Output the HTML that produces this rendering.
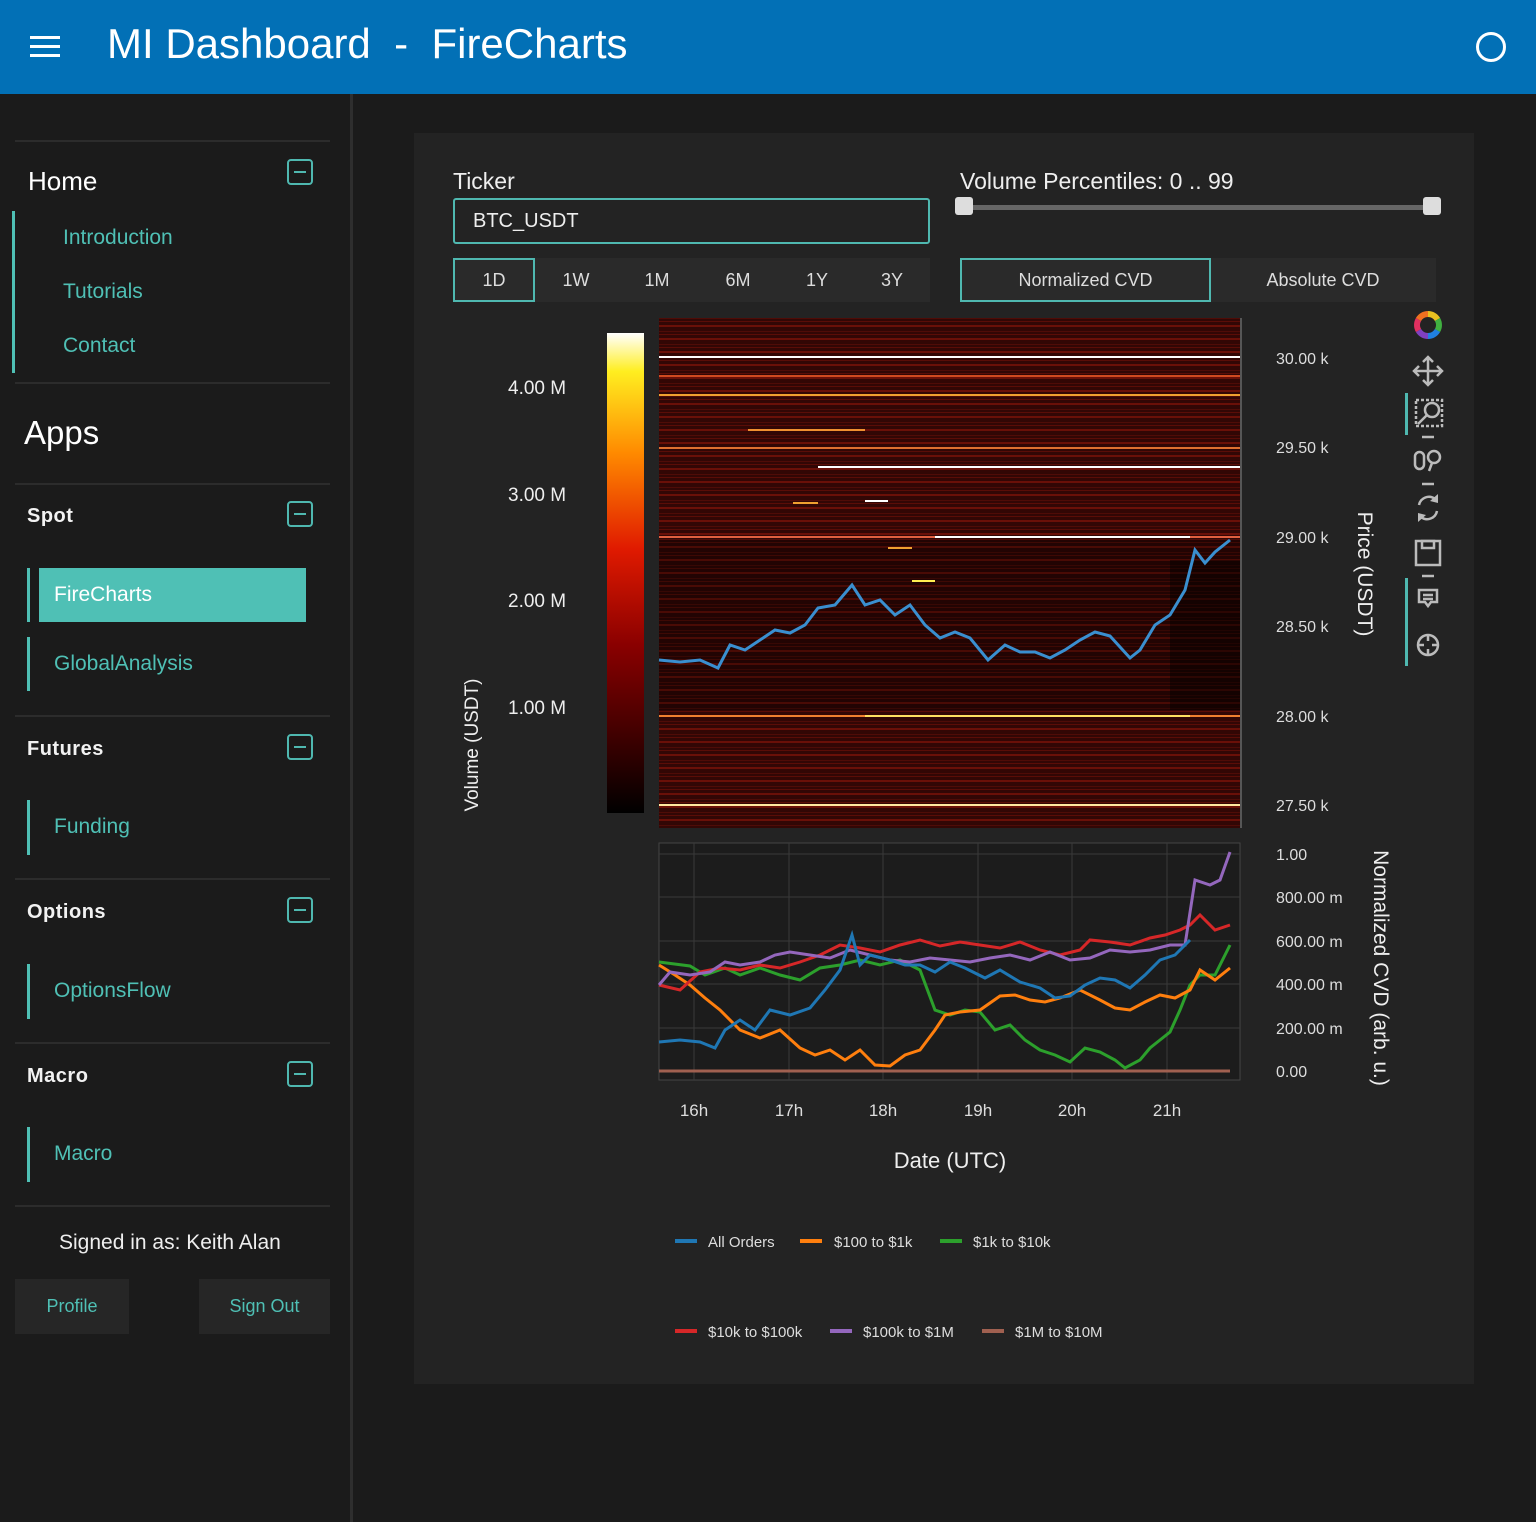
<!DOCTYPE html>
<html><head><meta charset="utf-8"><style>
*{margin:0;padding:0;box-sizing:border-box}
body{width:1536px;height:1522px;background:#1b1b1b;font-family:"Liberation Sans","DejaVu Sans",sans-serif;position:relative;overflow:hidden;color:#eee}
.hdr{position:absolute;left:0;top:0;width:1536px;height:94px;background:#0270b6}
.hdr .t{position:absolute;left:107px;top:20px;font-size:42px;color:#fff;white-space:pre}
.ham{position:absolute;left:30px;top:36px;width:30px}
.ham i{display:block;height:3px;background:#fff;margin-bottom:6px}
.circ{position:absolute;left:1476px;top:32px;width:30px;height:30px;border:3px solid #fff;border-radius:50%}
.sb{position:absolute;left:0;top:94px;width:353px;height:1428px;border-right:3px solid #2e2e2e}
.hr{position:absolute;left:15px;width:315px;height:2px;background:#2c2c2c}
.ab{position:absolute;font-size:22px;color:#fff}
.sec{position:absolute;left:27px;font-size:20px;font-weight:bold;color:#f2f2f2;letter-spacing:.5px}
.mn{position:absolute;left:287px;width:26px;height:26px;border:2px solid #4fb8b0;border-radius:4px}
.mn:after{content:"";position:absolute;left:5px;top:10px;width:12px;height:2px;background:#4fb8b0}
.lk{position:absolute;font-size:21px;color:#4fc0b5}
.vb{position:absolute;width:3px;background:#4fc0b5}
.btn{position:absolute;top:1279px;height:55px;background:#262626;color:#4fc0b5;font-size:18px;text-align:center;line-height:55px}
.panel{position:absolute;left:414px;top:133px;width:1060px;height:1251px;background:#232323}
.lbl{position:absolute;font-size:23px;color:#eee}
.tab{position:absolute;top:258px;height:44px;font-size:18px;color:#ddd;text-align:center;line-height:44px}
</style></head><body>
<div class="hdr"><div class="ham"><i></i><i></i><i></i></div><div class="t">MI Dashboard  -  FireCharts</div><div class="circ"></div></div>
<div class="sb"></div>
<div class="hr" style="top:140px"></div>
<div class="ab" style="left:28px;top:166px;font-size:26px">Home</div><div class="mn" style="top:159px"></div>
<div class="vb" style="left:12px;top:211px;height:162px"></div>
<div class="lk" style="left:63px;top:226px">Introduction</div>
<div class="lk" style="left:63px;top:280px">Tutorials</div>
<div class="lk" style="left:63px;top:334px">Contact</div>
<div class="hr" style="top:382px"></div>
<div class="ab" style="left:24px;top:414px;font-size:33px">Apps</div>
<div class="hr" style="top:483px"></div>
<div class="sec" style="top:505px">Spot</div><div class="mn" style="top:501px"></div>
<div class="vb" style="left:27px;top:568px;height:54px"></div>
<div style="position:absolute;left:39px;top:568px;width:267px;height:54px;background:#4fc0b5"></div>
<div class="lk" style="left:54px;top:583px;color:#fff">FireCharts</div>
<div class="vb" style="left:27px;top:637px;height:54px"></div>
<div class="lk" style="left:54px;top:652px">GlobalAnalysis</div>
<div class="hr" style="top:715px"></div>
<div class="sec" style="top:738px">Futures</div><div class="mn" style="top:734px"></div>
<div class="vb" style="left:27px;top:800px;height:55px"></div>
<div class="lk" style="left:54px;top:815px">Funding</div>
<div class="hr" style="top:878px"></div>
<div class="sec" style="top:901px">Options</div><div class="mn" style="top:897px"></div>
<div class="vb" style="left:27px;top:964px;height:55px"></div>
<div class="lk" style="left:54px;top:979px">OptionsFlow</div>
<div class="hr" style="top:1042px"></div>
<div class="sec" style="top:1065px">Macro</div><div class="mn" style="top:1061px"></div>
<div class="vb" style="left:27px;top:1127px;height:55px"></div>
<div class="lk" style="left:54px;top:1142px">Macro</div>
<div class="hr" style="top:1205px"></div>
<div class="ab" style="left:59px;top:1231px;font-size:21px;color:#eee">Signed in as: Keith Alan</div>
<div class="btn" style="left:15px;width:114px">Profile</div>
<div class="btn" style="left:199px;width:131px">Sign Out</div>

<div class="panel"></div>
<div class="lbl" style="left:453px;top:168px">Ticker</div>
<div style="position:absolute;left:453px;top:198px;width:477px;height:46px;border:2px solid #4fb8b0;border-radius:3px;font-size:20px;color:#eee;padding:10px 18px">BTC_USDT</div>
<div class="lbl" style="left:960px;top:168px">Volume Percentiles: 0 .. 99</div>
<div style="position:absolute;left:960px;top:205px;width:478px;height:5px;background:#666"></div>
<div style="position:absolute;left:955px;top:197px;width:18px;height:18px;background:#ddd;border-radius:3px"></div>
<div style="position:absolute;left:1423px;top:197px;width:18px;height:18px;background:#ddd;border-radius:3px"></div>
<div style="position:absolute;left:453px;top:258px;width:477px;height:44px;background:#2a2a2a"></div>
<div class="tab" style="left:453px;width:82px;border:2px solid #4fb8b0;line-height:40px">1D</div>
<div class="tab" style="left:535px;width:82px">1W</div>
<div class="tab" style="left:616px;width:82px">1M</div>
<div class="tab" style="left:697px;width:82px">6M</div>
<div class="tab" style="left:776px;width:82px">1Y</div>
<div class="tab" style="left:851px;width:82px">3Y</div>
<div style="position:absolute;left:960px;top:258px;width:476px;height:44px;background:#2a2a2a"></div>
<div class="tab" style="left:960px;width:251px;border:2px solid #4fb8b0;line-height:40px">Normalized CVD</div>
<div class="tab" style="left:1211px;width:224px">Absolute CVD</div>

<svg style="position:absolute;left:0;top:0" width="1536" height="1522" font-family="Liberation Sans, DejaVu Sans, sans-serif">
<defs>
<linearGradient id="cb" x1="0" y1="1" x2="0" y2="0"><stop offset="0" stop-color="#000"/><stop offset=".35" stop-color="#8a0000"/><stop offset=".55" stop-color="#e01a00"/><stop offset=".75" stop-color="#ff8a00"/><stop offset=".92" stop-color="#ffee20"/><stop offset="1" stop-color="#fff"/></linearGradient>
<pattern id="hp" width="8" height="13" patternUnits="userSpaceOnUse"><rect width="8" height="13" fill="#320705"/><rect y="0" width="8" height="2" fill="#6a1008"/><rect y="6" width="8" height="1" fill="#4f0c07"/><rect y="9" width="8" height="1" fill="#5a0d07"/></pattern>
</defs>
<rect x="607" y="333" width="37" height="480" fill="url(#cb)"/>
<g fill="#eee" font-size="19"><text x="508" y="394">4.00 M</text><text x="508" y="501">3.00 M</text><text x="508" y="607">2.00 M</text><text x="508" y="714">1.00 M</text></g>
<text transform="translate(478,745) rotate(-90)" text-anchor="middle" fill="#eee" font-size="19">Volume (USDT)</text>
<rect x="659" y="318" width="581" height="510" fill="url(#hp)"/>
<rect x="659" y="540" width="581" height="170" fill="#000" opacity=".3"/>
<rect x="1170" y="560" width="70" height="150" fill="#000" opacity=".4"/>
<g stroke-width="2">
<line x1="659" y1="357" x2="1240" y2="357" stroke="#fff"/>
<line x1="659" y1="376" x2="1240" y2="376" stroke="#d04a20"/>
<line x1="659" y1="395" x2="1240" y2="395" stroke="#f0a030"/>
<line x1="748" y1="430" x2="865" y2="430" stroke="#f09030"/>
<line x1="659" y1="448" x2="1240" y2="448" stroke="#e07030"/>
<line x1="818" y1="467" x2="1240" y2="467" stroke="#fff"/>
<line x1="793" y1="503" x2="818" y2="503" stroke="#f0a030"/>
<line x1="865" y1="501" x2="888" y2="501" stroke="#fff"/>
<line x1="659" y1="537" x2="1240" y2="537" stroke="#e06040"/>
<line x1="935" y1="537" x2="1190" y2="537" stroke="#fff"/>
<line x1="888" y1="548" x2="912" y2="548" stroke="#f0a030"/>
<line x1="912" y1="581" x2="935" y2="581" stroke="#ffee50"/>
<line x1="659" y1="716" x2="1240" y2="716" stroke="#f08030"/>
<line x1="865" y1="716" x2="1190" y2="716" stroke="#ffe060"/>
<line x1="659" y1="805" x2="1240" y2="805" stroke="#ffe8a0"/>
</g>
<polyline fill="none" stroke="#3a8fd0" stroke-width="3" points="659,660 680,662 700,660 718,668 730,645 745,650 760,640 775,630 790,633 805,625 818,608 835,605 852,585 865,605 880,600 895,615 910,605 925,625 940,638 955,632 970,638 988,660 1005,645 1020,652 1035,652 1050,658 1065,650 1080,640 1095,632 1110,636 1130,658 1140,650 1155,625 1170,615 1185,590 1195,550 1205,563 1215,552 1230,540"/>
<g stroke="#888" stroke-width="1"><line x1="1241" y1="318" x2="1241" y2="828"/></g>
<g fill="#ddd" font-size="16"><text x="1276" y="364">30.00 k</text><text x="1276" y="453">29.50 k</text><text x="1276" y="543">29.00 k</text><text x="1276" y="632">28.50 k</text><text x="1276" y="722">28.00 k</text><text x="1276" y="811">27.50 k</text></g>
<text transform="translate(1358,574) rotate(90)" text-anchor="middle" fill="#eee" font-size="21">Price (USDT)</text>
<rect x="659" y="843" width="581" height="237" fill="#1c1c1c" stroke="#444"/>
<g stroke="#3a3a3a"><line x1="694" y1="843" x2="694" y2="1080"/><line x1="789" y1="843" x2="789" y2="1080"/><line x1="883" y1="843" x2="883" y2="1080"/><line x1="978" y1="843" x2="978" y2="1080"/><line x1="1072" y1="843" x2="1072" y2="1080"/><line x1="1167" y1="843" x2="1167" y2="1080"/>
<line x1="659" y1="854" x2="1240" y2="854"/><line x1="659" y1="897" x2="1240" y2="897"/><line x1="659" y1="941" x2="1240" y2="941"/><line x1="659" y1="984" x2="1240" y2="984"/><line x1="659" y1="1028" x2="1240" y2="1028"/></g>
<g fill="none" stroke-width="3">
<polyline stroke="#2ca02c" points="659,962 690,966 705,975 725,968 740,975 760,968 780,975 800,980 820,968 840,965 860,960 880,965 900,960 920,970 935,1010 950,1015 965,1010 980,1012 995,1030 1010,1025 1025,1040 1040,1050 1055,1055 1070,1062 1085,1048 1100,1052 1115,1060 1125,1068 1140,1060 1150,1048 1160,1040 1170,1032 1180,1010 1190,985 1200,975 1215,975 1230,945"/>
<polyline stroke="#ff7f0e" points="659,965 675,975 690,985 705,998 720,1010 740,1030 760,1038 780,1030 800,1048 815,1055 830,1050 845,1060 860,1050 875,1065 890,1066 905,1055 920,1050 935,1030 945,1015 960,1012 980,1010 1000,996 1015,995 1030,1000 1045,1002 1060,998 1080,990 1100,1000 1115,1008 1130,1010 1145,1002 1160,995 1175,998 1190,990 1200,970 1215,980 1230,968"/>
<polyline stroke="#d62728" points="659,985 680,990 700,972 720,968 740,970 760,965 780,968 800,962 820,955 840,945 860,948 880,952 900,945 920,940 940,946 960,942 980,945 1000,948 1020,942 1040,950 1060,955 1080,950 1090,940 1110,942 1130,945 1150,938 1165,935 1180,930 1190,925 1200,915 1215,930 1230,925"/>
<polyline stroke="#9467bd" points="659,985 670,972 690,975 710,972 725,962 740,965 760,962 775,955 790,952 810,955 830,958 850,950 870,955 890,960 910,962 930,958 950,960 970,962 990,958 1010,955 1030,960 1050,952 1070,960 1090,958 1110,950 1130,952 1150,950 1170,945 1185,945 1195,880 1210,885 1220,880 1230,852"/>
<polyline stroke="#1f77b4" points="659,1042 680,1040 700,1042 715,1048 725,1030 740,1020 755,1030 770,1010 790,1015 810,1008 825,990 840,970 852,935 860,965 870,955 890,960 905,965 920,965 935,972 950,962 965,968 985,978 1000,970 1020,982 1040,988 1055,998 1070,996 1085,985 1100,978 1115,980 1130,988 1145,975 1160,960 1175,955 1190,940"/>
<line stroke="#a06050" x1="659" y1="1071" x2="1230" y2="1071"/>
</g>
<g fill="#ddd" font-size="16"><text x="1276" y="860">1.00</text><text x="1276" y="903">800.00 m</text><text x="1276" y="947">600.00 m</text><text x="1276" y="990">400.00 m</text><text x="1276" y="1034">200.00 m</text><text x="1276" y="1077">0.00</text></g>
<text transform="translate(1374,968) rotate(90)" text-anchor="middle" fill="#eee" font-size="21">Normalized CVD (arb. u.)</text>
<g fill="#ddd" font-size="17" text-anchor="middle"><text x="694" y="1116">16h</text><text x="789" y="1116">17h</text><text x="883" y="1116">18h</text><text x="978" y="1116">19h</text><text x="1072" y="1116">20h</text><text x="1167" y="1116">21h</text></g>
<text x="950" y="1168" text-anchor="middle" fill="#eee" font-size="22">Date (UTC)</text>
<g font-size="15" fill="#ddd" stroke-width="4">
<line x1="675" y1="1241" x2="697" y2="1241" stroke="#1f77b4"/><text x="708" y="1247">All Orders</text>
<line x1="800" y1="1241" x2="822" y2="1241" stroke="#ff7f0e"/><text x="834" y="1247">$100 to $1k</text>
<line x1="940" y1="1241" x2="962" y2="1241" stroke="#2ca02c"/><text x="973" y="1247">$1k to $10k</text>
<line x1="675" y1="1331" x2="697" y2="1331" stroke="#d62728"/><text x="708" y="1337">$10k to $100k</text>
<line x1="830" y1="1331" x2="852" y2="1331" stroke="#9467bd"/><text x="863" y="1337">$100k to $1M</text>
<line x1="982" y1="1331" x2="1004" y2="1331" stroke="#a06050"/><text x="1015" y="1337">$1M to $10M</text>
</g>
<g stroke-width="6" fill="none">
<path d="M1428 314a11 11 0 0 1 9.5 5.5" stroke="#e8c020"/>
<path d="M1437.5 319.5a11 11 0 0 1 0 11" stroke="#40b040"/>
<path d="M1437.5 330.5a11 11 0 0 1-9.5 5.5" stroke="#2080e0"/>
<path d="M1428 336a11 11 0 0 1-9.5-5.5" stroke="#8040c0"/>
<path d="M1418.5 330.5a11 11 0 0 1 0-11" stroke="#e03060"/>
<path d="M1418.5 319.5a11 11 0 0 1 9.5-5.5" stroke="#f07020"/>
</g>
<g fill="none" stroke="#bbb" stroke-width="2.5">
<path d="M1428 358v26M1415 371h26M1423 362l5-5 5 5M1423 380l5 5 5-5M1419 366l-5 5 5 5M1437 366l5 5-5 5"/>
<rect x="1416" y="400" width="26" height="26" stroke-dasharray="3 2"/><circle cx="1432" cy="410" r="7"/><path d="M1427 415l-9 9"/>
<line x1="1422" y1="437" x2="1434" y2="437"/>
<rect x="1415" y="452" width="9" height="17" rx="4.5"/><circle cx="1434" cy="457" r="6"/><path d="M1432 463l-3 8"/>
<line x1="1422" y1="484" x2="1434" y2="484"/>
<path d="M1419 505a10 10 0 0 1 16-6M1437 511a10 10 0 0 1-16 6"/>
</g>
<g fill="#bbb"><path d="M1438 494l0 9-8-2z"/><path d="M1418 522l0-9 8 2z"/></g>
<g fill="none" stroke="#bbb" stroke-width="2.5">
<rect x="1416" y="541" width="24" height="24"/><rect x="1422" y="541" width="12" height="7"/>
<line x1="1422" y1="576" x2="1434" y2="576"/>
<path d="M1419 590h18v12h-6l-3 4-3-4h-6z M1423 595h10M1423 599h10"/>
<circle cx="1428" cy="645" r="10"/><path d="M1428 635v6M1428 649v6M1418 645h6M1432 645h6"/>
</g>
<rect x="1405" y="393" width="3" height="42" fill="#4fb8b0"/>
<rect x="1405" y="578" width="3" height="88" fill="#4fb8b0"/>
</svg>
</body></html>
